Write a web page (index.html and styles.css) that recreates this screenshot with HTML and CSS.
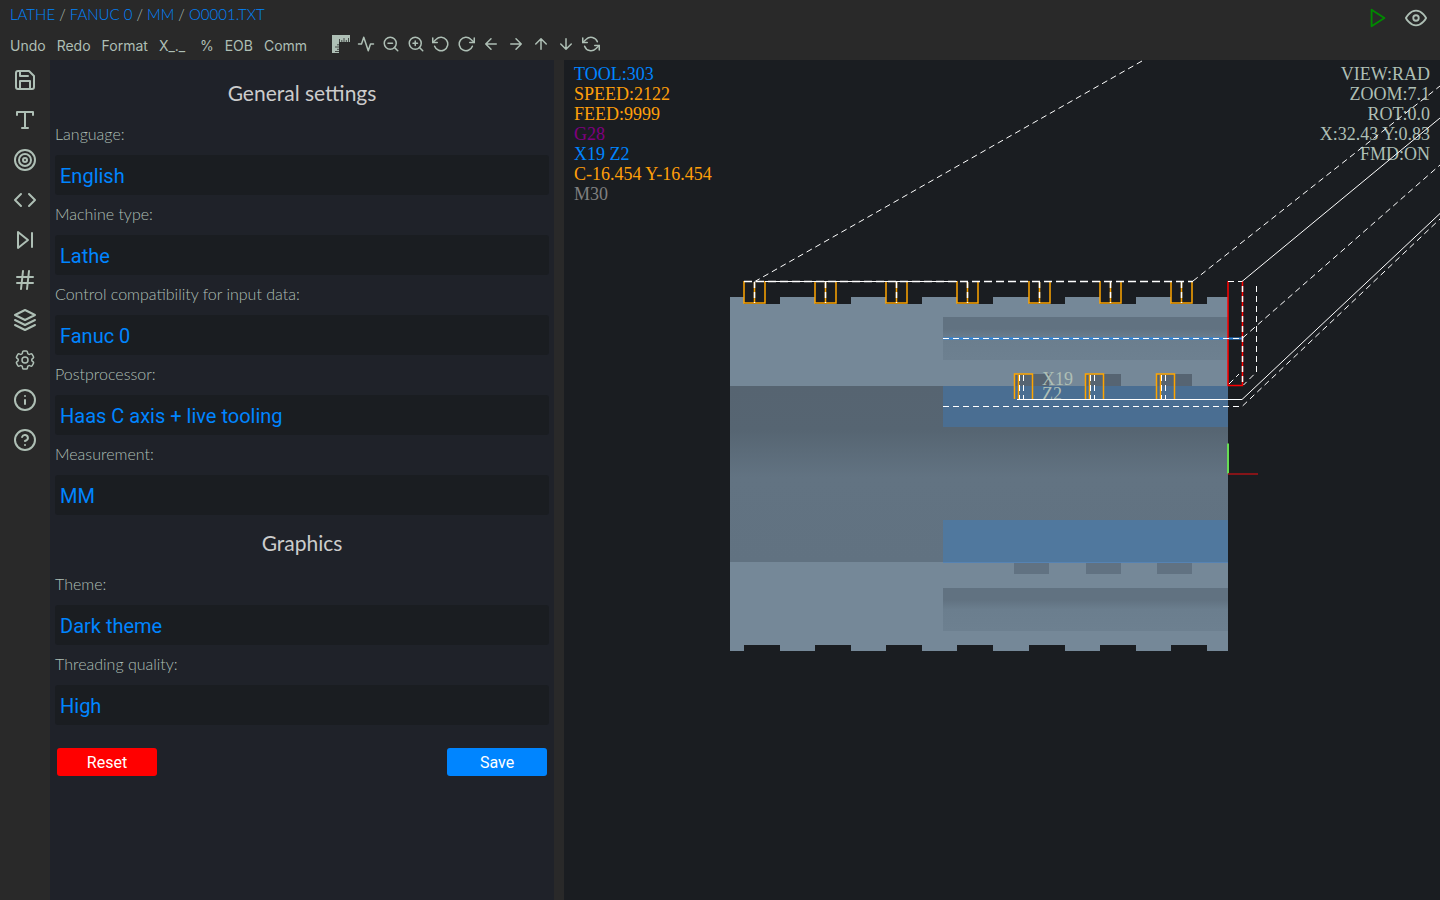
FILE: index.html
```html
<!DOCTYPE html>
<html lang="en">
<head>
<meta charset="utf-8">
<title>Lathe editor</title>
<link rel="stylesheet" href="styles.css">
</head>
<body>
<div class="app">
  <header class="topbar">
    <div class="topbar-main">
      <nav class="crumbs" aria-label="Breadcrumb"><a href="#">LATHE</a> / <a href="#">FANUC 0</a> / <a href="#">MM</a> / <a href="#">O0001.TXT</a></nav>
      <div class="toolbar">
        <div class="text-tools">
          <button type="button">Undo</button>
          <button type="button">Redo</button>
          <button type="button">Format</button>
          <button type="button" class="axis-tool">X_._</button>
          <button type="button">%</button>
          <button type="button">EOB</button>
          <button type="button">Comm</button>
        </div>
        <div class="icon-tools">
          <button type="button" aria-label="Ruler"><svg class="icon-sm" viewBox="0 0 18 18"><path class="fill" d="M0 0h18v7H7v11H0z"/><path class="ticks" d="M7.500 7.500V4M9.800 7.500V5M12 7.500V3M14.300 7.500V5M16.500 7.500V3M7.500 9.800H5M7.500 12H3M7.500 14.300H5M7.500 16.500H3"/></svg></button>
          <button type="button" aria-label="Activity"><svg class="icon-sm" viewBox="0 0 24 24"><path d="M22 12h-4l-3 9L9 3l-3 9H2"/></svg></button>
          <button type="button" aria-label="Zoom out"><svg class="icon-sm" viewBox="0 0 24 24"><circle cx="11" cy="11" r="8"/><path d="M21 21l-4.350-4.350M8 11h6"/></svg></button>
          <button type="button" aria-label="Zoom in"><svg class="icon-sm" viewBox="0 0 24 24"><circle cx="11" cy="11" r="8"/><path d="M21 21l-4.350-4.350M8 11h6M11 8v6"/></svg></button>
          <button type="button" aria-label="Rotate left"><svg class="icon-sm" viewBox="0 0 24 24"><path d="M1 4v6h6"/><path d="M3.510 15a9 9 0 1 0 2.130-9.360L1 10"/></svg></button>
          <button type="button" aria-label="Rotate right"><svg class="icon-sm" viewBox="0 0 24 24"><path d="M23 4v6h-6"/><path d="M20.490 15a9 9 0 1 1-2.120-9.360L23 10"/></svg></button>
          <button type="button" aria-label="Left"><svg class="icon-sm" viewBox="0 0 24 24"><path d="M19 12H5M12 19l-7-7 7-7"/></svg></button>
          <button type="button" aria-label="Right"><svg class="icon-sm" viewBox="0 0 24 24"><path d="M5 12h14M12 5l7 7-7 7"/></svg></button>
          <button type="button" aria-label="Up"><svg class="icon-sm" viewBox="0 0 24 24"><path d="M12 19V5M5 12l7-7 7 7"/></svg></button>
          <button type="button" aria-label="Down"><svg class="icon-sm" viewBox="0 0 24 24"><path d="M12 5v14M19 12l-7 7-7-7"/></svg></button>
          <button type="button" aria-label="Refresh"><svg class="icon-sm" viewBox="0 0 24 24"><path d="M1 4v6h6M23 20v-6h-6"/><path d="M20.490 9A9 9 0 0 0 5.640 5.640L1 10m22 4l-4.640 4.360A9 9 0 0 1 3.510 15"/></svg></button>
        </div>
      </div>
    </div>
    <div class="run-tools">
      <button type="button" class="play" aria-label="Run"><svg class="icon-md" viewBox="0 0 24 24"><path d="M5 3l14 9-14 9z"/></svg></button>
      <button type="button" aria-label="View"><svg class="icon-md" viewBox="0 0 24 24"><path d="M1 12s4-8 11-8 11 8 11 8-4 8-11 8-11-8-11-8z"/><circle cx="12" cy="12" r="3"/></svg></button>
    </div>
  </header>

  <nav class="rail" aria-label="Tools">
    <button type="button" aria-label="Save file"><svg class="icon" viewBox="0 0 24 24"><path d="M19 21H5a2 2 0 0 1-2-2V5a2 2 0 0 1 2-2h11l5 5v11a2 2 0 0 1-2 2z"/><path d="M17 21v-8H7v8M7 3v5h8"/></svg></button>
    <button type="button" aria-label="Text"><svg class="icon" viewBox="0 0 24 24"><path d="M4 7V4h16v3M9 20h6M12 4v16"/></svg></button>
    <button type="button" aria-label="Target"><svg class="icon" viewBox="0 0 24 24"><circle cx="12" cy="12" r="10"/><circle cx="12" cy="12" r="6"/><circle cx="12" cy="12" r="2"/></svg></button>
    <button type="button" aria-label="Code"><svg class="icon" viewBox="0 0 24 24"><path d="M16 18l6-6-6-6M8 6l-6 6 6 6"/></svg></button>
    <button type="button" aria-label="Step"><svg class="icon" viewBox="0 0 24 24"><path d="M5 4l10 8-10 8zM19 5v14"/></svg></button>
    <button type="button" aria-label="Numbering"><svg class="icon" viewBox="0 0 24 24"><path d="M4 9h16M4 15h16M10 3L8 21M16 3l-2 18"/></svg></button>
    <button type="button" aria-label="Layers"><svg class="icon" viewBox="0 0 24 24"><path d="M12 2L2 7l10 5 10-5zM2 17l10 5 10-5M2 12l10 5 10-5"/></svg></button>
    <button type="button" aria-label="Settings"><svg class="icon gear" viewBox="0 0 24 24"><path d="M9.594 3.940c.090-.542.560-.940 1.110-.940h2.593c.550 0 1.020.398 1.110.940l.213 1.281c.063.374.313.686.645.870.074.040.147.083.220.127.325.196.720.257 1.075.124l1.217-.456a1.125 1.125 0 0 1 1.370.490l1.296 2.247a1.125 1.125 0 0 1-.260 1.431l-1.003.827c-.293.241-.438.613-.430.992a7.723 7.723 0 0 1 0 .255c-.008.378.137.750.430.991l1.004.827c.424.350.534.955.260 1.430l-1.298 2.247a1.125 1.125 0 0 1-1.369.491l-1.217-.456c-.355-.133-.750-.072-1.076.124a6.470 6.470 0 0 1-.220.128c-.331.183-.581.495-.644.869l-.213 1.281c-.090.543-.560.940-1.110.940h-2.594c-.550 0-1.019-.398-1.110-.940l-.213-1.281c-.062-.374-.312-.686-.644-.870a6.520 6.520 0 0 1-.220-.127c-.325-.196-.720-.257-1.076-.124l-1.217.456a1.125 1.125 0 0 1-1.369-.490l-1.297-2.247a1.125 1.125 0 0 1 .260-1.431l1.004-.827c.292-.240.437-.613.430-.991a6.932 6.932 0 0 1 0-.255c.007-.380-.138-.751-.430-.992l-1.004-.827a1.125 1.125 0 0 1-.260-1.430l1.297-2.247a1.125 1.125 0 0 1 1.370-.491l1.216.456c.356.133.751.072 1.076-.124.072-.044.146-.086.220-.128.332-.183.582-.495.644-.869z"/><circle cx="12" cy="12" r="3"/></svg></button>
    <button type="button" aria-label="Info"><svg class="icon" viewBox="0 0 24 24"><circle cx="12" cy="12" r="10"/><path d="M12 16v-4M12 8h.010"/></svg></button>
    <button type="button" aria-label="Help"><svg class="icon" viewBox="0 0 24 24"><circle cx="12" cy="12" r="10"/><path d="M9.090 9a3 3 0 0 1 5.830 1c0 2-3 3-3 3M12 17h.010"/></svg></button>
  </nav>

  <form class="panel">
    <h2>General settings</h2>
    <label for="language">Language:</label>
    <select id="language"><option>English</option></select>
    <label for="machine">Machine type:</label>
    <select id="machine"><option>Lathe</option></select>
    <label for="control">Control compatibility for input data:</label>
    <select id="control"><option>Fanuc 0</option></select>
    <label for="post">Postprocessor:</label>
    <select id="post"><option>Haas C axis + live tooling</option></select>
    <label for="measure">Measurement:</label>
    <select id="measure"><option>MM</option></select>
    <h2>Graphics</h2>
    <label for="theme">Theme:</label>
    <select id="theme"><option>Dark theme</option></select>
    <label for="quality">Threading quality:</label>
    <select id="quality"><option>High</option></select>
    <div class="actions">
      <button type="reset" class="reset">Reset</button>
      <button type="submit" class="save">Save</button>
    </div>
  </form>

  <main class="stage">
    <svg class="scene" viewBox="564 60 876 840" preserveAspectRatio="xMinYMin meet">
      <defs>
        <linearGradient id="bore" x1="0" y1="0" x2="0" y2="1"><stop offset="0" stop-color="#566471"/><stop offset=".25" stop-color="#566572"/><stop offset=".52" stop-color="#627382"/><stop offset="1" stop-color="#617281"/></linearGradient>
        <linearGradient id="groove" x1="0" y1="0" x2="0" y2="1"><stop offset="0" stop-color="#617281"/><stop offset=".28" stop-color="#617281"/><stop offset=".5" stop-color="#6b7e8e"/><stop offset="1" stop-color="#6d8090"/></linearGradient>
        <g id="slot"><path class="void" d="M744 296h36v7.500h-36z"/><path class="void" d="M744 645h36v7h-36z"/></g>
        <g id="cut"><path class="orange" d="M744 281v22h21v-22"/><path class="orange" d="M754.500 282v20"/><path class="white heavy dash" d="M754.500 282v21"/></g>
        <g id="pocket"><path fill="#566472" d="M1014 374h35v12h-35z"/><path fill="#617282" d="M1014 563h35v11h-35z"/></g>
        <g id="mill"><path class="orange" d="M1014.500 399v-25h18v25M1018.500 375v24"/><path class="white dash" d="M1019.500 375v24M1023.500 375v24"/></g>
      </defs>
      <g shape-rendering="crispEdges">
        <path fill="#758898" d="M730 297h498v354H730z"/>
        <path fill="url(#bore)" d="M730 386h498v176H730z"/>
        <path fill="url(#groove)" d="M943 317h285v43H943z"/>
        <path fill="url(#groove)" d="M943 588h285v43H943z"/>
        <path fill="#4a6e92" d="M943 386h285v41H943z"/>
        <path fill="#50789e" d="M943 520h285v42H943z"/>
        <path fill="#5683b3" d="M943 562h285v1H943z"/>
        <use href="#pocket"/><use href="#pocket" x="72"/><use href="#pocket" x="143"/>
        <use href="#slot"/><use href="#slot" x="71"/><use href="#slot" x="142"/><use href="#slot" x="213"/><use href="#slot" x="285"/><use href="#slot" x="356"/><use href="#slot" x="427"/>
      </g>
      <g class="label"><text x="1042" y="385">X19</text><text x="1042" y="400">Z2</text></g>
      <g class="lines">
        <use href="#cut"/><use href="#cut" x="71"/><use href="#cut" x="142"/><use href="#cut" x="213"/><use href="#cut" x="285"/><use href="#cut" x="356"/><use href="#cut" x="427"/>
        <use href="#mill"/><use href="#mill" x="71"/><use href="#mill" x="142"/>
        <path class="blue" d="M943 338.500h300"/>
        <path class="red" d="M1228 281v104.500h14.500V281"/>
        <path class="white heavy long" d="M744 281.500h449"/>
        <path class="white" d="M765 281.500h192"/>
        <path class="white heavy dash" d="M1242.500 286v98"/>
        <path class="white dash" d="M1142 61L754 282M1193 281L1440 86M943 338.500h299L1440 165M943 406.500h299L1440 219M1228 281.500h14M1256.500 286v86l-13 13M1229 384l10-10"/>
        <path class="white" d="M1242 281.500L1440 118M1017 399.500h225L1440 213.500"/>
        <path class="green" d="M1228 443.500v30"/>
        <path class="axis" d="M1228 474h30"/>
      </g>
    </svg>
    <div class="hud">
      <div class="hud-left">
        <div class="c-blue">TOOL:303</div>
        <div class="c-orange">SPEED:2122</div>
        <div class="c-orange">FEED:9999</div>
        <div class="c-purple">G28</div>
        <div class="c-blue">X19 Z2</div>
        <div class="c-orange">C-16.454 Y-16.454</div>
        <div class="c-gray">M30</div>
      </div>
      <div class="hud-right">
        <div>VIEW:RAD</div>
        <div>ZOOM:7.1</div>
        <div>ROT:0.0</div>
        <div>X:32.43 Y:0.83</div>
        <div>FMD:ON</div>
      </div>
    </div>
  </main>
</div>
</body>
</html>
```

FILE: styles.css
```css
* { box-sizing: border-box; }
body {
  margin: 0;
  background: #292929;
  color: #aebfb5;
  font-family: Inter, sans-serif;
}
button {
  margin: 0;
  padding: 0;
  border: 0;
  background: none;
  color: inherit;
  font: inherit;
  cursor: pointer;
}
svg { display: block; }
.app {
  display: grid;
  grid-template-columns: 50px 35% 1fr;
  grid-template-rows: 60px 1fr;
  min-height: 100vh;
}
.topbar {
  grid-column: 1 / -1;
  display: flex;
  justify-content: space-between;
  padding: 4px 13px 0 10px;
}
.crumbs {
  height: 28px;
  font: 300 15px/20px Lato, sans-serif;
}
.crumbs a { color: #0085ff; text-decoration: none; }
.toolbar { display: flex; gap: 25px; font-size: 14px; line-height: 28px; }
.text-tools { display: flex; gap: 11px; }
.axis-tool { min-width: 30px; text-align: left; }
.icon-tools { display: flex; gap: 7px; height: 24px; }
.icon, .icon-sm, .icon-md {
  fill: none;
  stroke: currentColor;
  stroke-width: 2;
  stroke-linecap: round;
  stroke-linejoin: round;
}
.icon { width: 24px; height: 24px; }
.icon-sm { width: 18px; height: 18px; }
.icon-md { width: 22px; height: 22px; }
.gear { stroke-width: 1.5; }
.fill { fill: currentColor; stroke: none; }
.ticks { stroke: #292929; stroke-width: 0.8; stroke-linecap: butt; }
.run-tools { display: flex; gap: 16px; height: 28px; }
.play { color: #008a00; }
.rail { display: flex; flex-direction: column; }
.rail button { display: grid; place-items: center; height: 40px; }
.panel {
  display: flex;
  flex-direction: column;
  padding: 5px;
  background: #1f2229;
}
.panel h2 {
  margin: 8px 0 2px;
  text-align: center;
  color: #cccccc;
  font: 400 21px/40px Lato, sans-serif;
}
.panel label { font: 300 16px/38px Lato, sans-serif; padding-bottom: 2px; }
.panel select {
  appearance: none;
  width: 100%;
  height: 40px;
  padding: 2px 5px 0;
  border: 0;
  border-radius: 3px;
  background: #1a1d21;
  color: #0085ff;
  font: 400 20px Roboto, sans-serif;
}
.actions {
  display: flex;
  justify-content: space-between;
  margin-top: 23px;
  padding: 0 2px;
}
.actions button {
  width: 100px;
  height: 28px;
  border-radius: 3px;
  color: #ffffff;
  font: 400 16px Roboto, sans-serif;
}
.actions .reset { background: #ff0000; }
.actions .save { background: #0085ff; }
.stage {
  position: relative;
  margin-left: 10px;
  background: #1a1d21;
  overflow: hidden;
}
.scene { position: absolute; inset: 0; width: 100%; height: 100%; z-index: 1; }
.hud {
  display: flex;
  justify-content: space-between;
  padding: 4px 10px;
  font: 18px/20px "Liberation Serif", serif;
}
.hud-right { text-align: right; }
.c-blue { color: #0085ff; }
.c-orange { color: #ff9f0a; }
.c-purple { color: #800080; }
.c-gray { color: #808080; }
.void { fill: #1a1d21; }
.label { fill: #aebfb5; font: 18px "Liberation Serif", serif; }
.lines { fill: none; }
.white { stroke: #ffffff; stroke-width: 1; }
.heavy { stroke-width: 1.5; }
.dash { stroke-dasharray: 6 4; }
.long { stroke-dasharray: 8 4; }
.orange { stroke: #ffa500; stroke-width: 1.5; }
.blue { stroke: #2d86df; stroke-width: 2; }
.red { stroke: #ff0000; stroke-width: 1.5; }
.green { stroke: #66dd55; stroke-width: 2; }
.axis { stroke: #a81216; stroke-width: 1.5; }
```
